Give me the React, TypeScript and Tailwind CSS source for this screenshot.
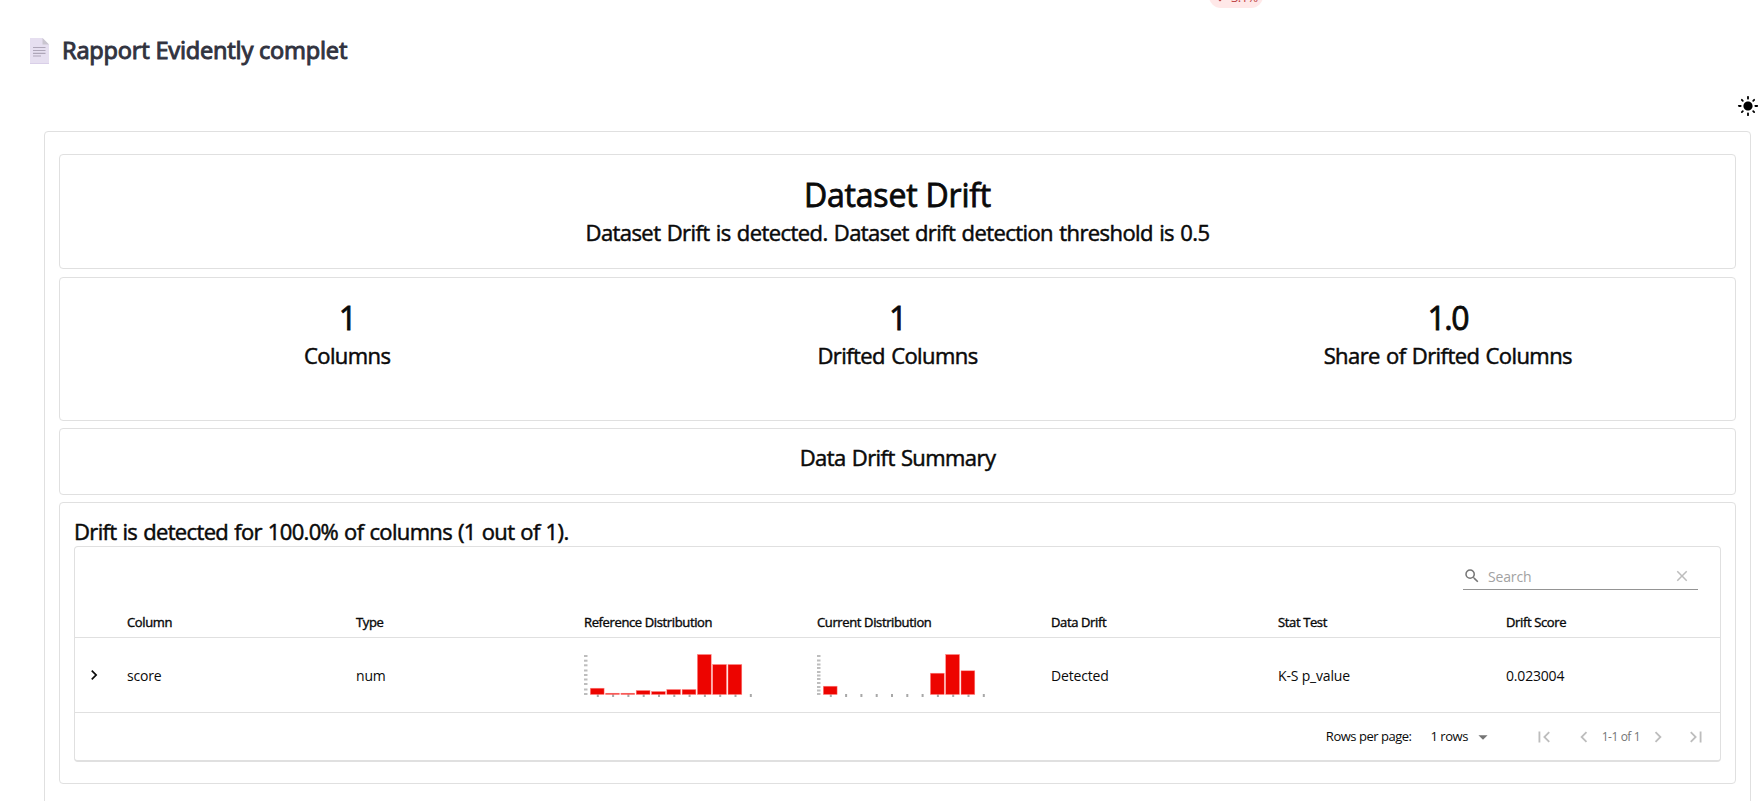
import { MdSearch, MdClose, MdChevronRight, MdChevronLeft, MdFirstPage, MdLastPage, MdArrowDropDown, MdLightMode } from "react-icons/md";

type Dist = { ticks: number[]; bars: number[] };

const reference: Dist = {
  ticks: [4, 8.7, 13.3, 18.5, 23, 27.5, 32, 37.5, 42],
  bars: [6.3, 1.3, 1.3, 4, 3, 5, 5, 40, 30, 30],
};
const current: Dist = {
  ticks: [4, 8.5, 12.5, 16, 20, 23.5, 27, 31, 35, 38.5, 42],
  bars: [8.3, 0, 0, 0, 0, 0, 0, 21.3, 40, 23.7],
};

function Histogram({ ticks, bars }: Dist) {
  return (
    <svg width="170" height="46" viewBox="0 0 170 46" className="block">
      {ticks.map((y) => (
        <rect key={y} x="0" y={y - 1} width="3.5" height="2" fill="#bdbdbd" />
      ))}
      {Array.from({ length: 11 }, (_, i) => (
        <rect key={i} x={12.8 + i * 15.3} y="42" width="2" height="3" fill="#a8a8a8" />
      ))}
      {bars.map((h, i) =>
        h > 0 ? (
          <rect key={i} x={6.3 + i * 15.3} y={42.5 - h} width="13.8" height={h} fill="#ed0400" stroke="#ff8a88" strokeWidth="0.5" />
        ) : null
      )}
    </svg>
  );
}

const big = "text-[32px] leading-[40px] [-webkit-text-stroke:0.8px_#0a0a0a]";
const medium = "text-[22px] leading-[36px] [-webkit-text-stroke:0.5px_#0a0a0a]";
const spaced = "tracking-[-0.58px] [word-spacing:1.1px]";

function Metric({ value, label }: { value: string; label: string }) {
  return (
    <div className="flex-1 text-center">
      <div className={`${big} tracking-[-1.4px]`}>{value}</div>
      <div className={`${medium} ${spaced} mt-[-1px]`}>{label}</div>
    </div>
  );
}

const card = "rounded-[4px] border border-[#e0e0e0]";
const grid = "grid grid-cols-[52px_229px_228px_233px_234px_227px_228px_1fr]";

export default function App() {
  return (
    <div className="relative h-[801px] w-[1760px] overflow-hidden bg-white font-['Open_Sans','Noto_Sans',sans-serif] text-[#0a0a0a]">
      <div className="absolute left-[1209px] top-[-16px] flex h-[24px] w-[54px] items-center rounded-full bg-[#ffe8e8] pl-[6px] pt-[3px] text-[13px] text-[#bd4043]">
        <svg width="10" height="12" viewBox="0 0 10 12" className="mt-[-3px]"><path d="M5 0V10M1 6.5L5 10.5L9 6.5" fill="none" stroke="#bd4043" strokeWidth="1.5" /></svg>
        <span className="ml-[6px] tracking-[-0.6px]">3.1%</span>
      </div>
      <header className="flex h-[101px] items-center pl-[30px]">
        <svg width="19" height="26" viewBox="0 0 19 26">
          <path d="M0 0H12.5L19 6.5V26H0Z" fill="#e6dff0" />
          <path d="M12.5 0L19 6.5H12.5Z" fill="#c9c5cf" />
          <path d="M3 9.5H15.5M3 12.5H15.5M3 15.3H15.5M3 18H11" stroke="#aea6b8" strokeWidth="1.2" />
          <path d="M0 25.5H19" stroke="#d9cfe8" />
        </svg>
        <h1 className="ml-[13px] whitespace-nowrap font-['Noto_Sans',sans-serif] text-[23.5px] tracking-[-0.23px] text-[#31333f] [-webkit-text-stroke:0.9px_#31333f]">Rapport Evidently complet</h1>
      </header>
      <div className="flex h-[30px] justify-end pr-px">
        <MdLightMode size={22} className="mt-[-6px] text-black" />
      </div>
      <main className="ml-[44px] h-[700px] w-[1707px] rounded-[4px] border border-[#e0e0e0] px-[14px] pt-[22px]">
        <section className={`${card} h-[115px] pt-[20px] text-center`}>
          <h2 className={`${big} tracking-[-0.2px]`}>Dataset Drift</h2>
          <p className={`${medium} ${spaced} mt-[-1px]`}>Dataset Drift is detected. Dataset drift detection threshold is 0.5</p>
        </section>
        <section className={`${card} mt-[8px] flex h-[144px] px-[12px] pt-[20px]`}>
          <Metric value="1" label="Columns" />
          <Metric value="1" label="Drifted Columns" />
          <Metric value="1.0" label="Share of Drifted Columns" />
        </section>
        <section className={`${card} mt-[7px] h-[67px] pt-[10px] text-center`}>
          <h3 className={`${medium} ${spaced}`}>Data Drift Summary</h3>
        </section>
        <section className={`${card} mt-[7px] h-[282px] px-[14px] pt-[10px]`}>
          <h3 className={`${medium} mb-[-3px] tracking-[-0.65px] [word-spacing:0.9px]`}>Drift is detected for 100.0% of columns (1 out of 1).</h3>
          <div className="h-[216px] rounded-[4px] border border-b-2 border-[#e0e0e0]">
            <div className="flex h-[58px] justify-end pr-[22px] pt-[13px]">
              <div className="flex h-[30px] w-[235px] items-center border-b border-[#949494] pt-[3px] text-[14px] tracking-[-0.15px] text-[#a2a2a2]">
                <MdSearch size={18} className="text-[#757575]" />
                <span className="ml-[7px] flex-1">Search</span>
                <MdClose size={18} className="mr-[7px] text-[#bdbdbd]" />
              </div>
            </div>
            <div className={`${grid} h-[33px] border-b border-[#e0e0e0] text-[13px] leading-[34px] tracking-[-0.37px] [-webkit-text-stroke:0.4px_#0a0a0a]`}>
              <i />
              <span>Column</span><span>Type</span><span>Reference Distribution</span><span>Current Distribution</span><span>Data Drift</span><span>Stat Test</span><span>Drift Score</span>
            </div>
            <div className={`${grid} h-[75px] items-center border-b border-[#e0e0e0] text-[14px] tracking-[-0.18px]`}>
              <MdChevronRight size={20} className="ml-[9px]" />
              <span>score</span><span>num</span><Histogram {...reference} /><Histogram {...current} /><span>Detected</span><span>K-S p_value</span><span>0.023004</span>
            </div>
            <div className="flex h-[48px] items-center justify-end pr-[13px] text-[13px] tracking-[-0.48px]">
              <span>Rows per page:</span>
              <span className="ml-[19px]">1 rows</span>
              <MdArrowDropDown size={22} className="ml-[4px] text-[#757575]" />
              <MdFirstPage size={22} className="ml-[39px] text-[#bdbdbd]" />
              <MdChevronLeft size={22} className="ml-[18px] text-[#bdbdbd]" />
              <span className="ml-[7px] text-[12px] tracking-[-0.6px] [word-spacing:0.5px] text-[#757575]">1-1 of 1</span>
              <MdChevronRight size={22} className="ml-[7px] text-[#bdbdbd]" />
              <MdLastPage size={22} className="ml-[16px] text-[#bdbdbd]" />
            </div>
          </div>
        </section>
      </main>
    </div>
  );
}
